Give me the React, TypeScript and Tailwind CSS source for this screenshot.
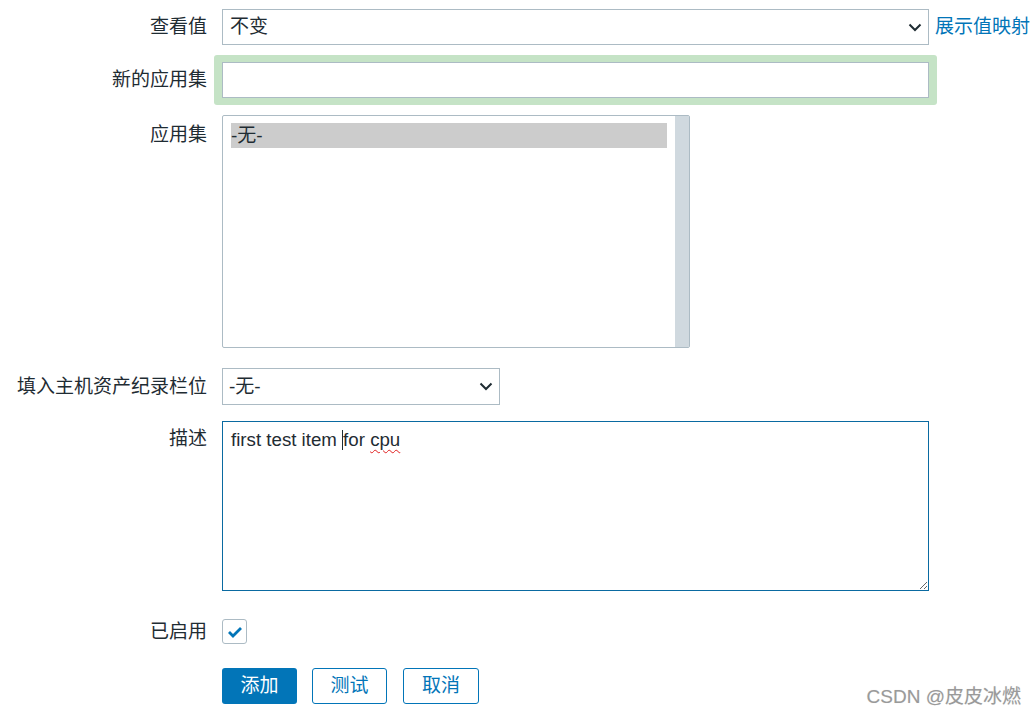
import React from "react";

const FONT = { fontFamily: '"Liberation Sans", "Noto Sans CJK SC", sans-serif' };

function Chevron() {
  return (
    <svg width="14" height="9" viewBox="0 0 14 9" className="shrink-0">
      <path d="M1.5 1.5 L7 7 L12.5 1.5" fill="none" stroke="#1f2c33" strokeWidth="2" />
    </svg>
  );
}

function Label({ children, className = "" }: { children: React.ReactNode; className?: string }) {
  return (
    <div className={`w-[207px] shrink-0 text-right text-[19px] leading-[24px] text-[#1f2c33] ${className}`}>
      {children}
    </div>
  );
}

export default function App() {
  return (
    <div className="relative w-[1035px] h-[715px] bg-white overflow-hidden" style={FONT}>
      <div className="flex flex-col pt-[9px]">
        {/* 查看值 */}
        <div className="flex items-center">
          <Label>查看值</Label>
          <div className="ml-[15px] w-[707px] h-[36px] border border-[#acbbc4] flex items-center justify-between pl-[7px] pr-[6px]">
            <span className="text-[19px] leading-[24px] text-[#1f2c33]">不变</span>
            <Chevron />
          </div>
          <a className="ml-[6px] text-[19px] leading-[24px] text-[#0275b8] whitespace-nowrap">展示值映射</a>
        </div>

        {/* 新的应用集 */}
        <div className="flex items-center mt-[10px]">
          <Label>新的应用集</Label>
          <div className="ml-[7px] p-[7px] pl-[8px] pr-[8px] bg-[#c5e3c6] rounded-[3px]">
            <div className="w-[707px] h-[36px] border border-[#acbbc4] bg-white" />
          </div>
        </div>

        {/* 应用集 */}
        <div className="flex mt-[10px]">
          <Label className="pt-[8px]">应用集</Label>
          <div className="ml-[15px] w-[468px] h-[233px] border border-[#acbbc4] rounded-[2px] flex">
            <div className="flex-1 pl-[8px] pr-[8px] pt-[7px]">
              <div className="h-[25px] bg-[#cccccc] text-[19px] leading-[25px] text-[#1f2c33]">-无-</div>
            </div>
            <div className="w-[14px] bg-[#d0d9df]" />
          </div>
        </div>

        {/* 填入主机资产纪录栏位 */}
        <div className="flex items-center mt-[20px]">
          <Label>填入主机资产纪录栏位</Label>
          <div className="ml-[15px] w-[278px] h-[37px] border border-[#acbbc4] flex items-center justify-between pl-[6px] pr-[6px]">
            <span className="text-[19px] leading-[24px] text-[#1f2c33]">-无-</span>
            <Chevron />
          </div>
        </div>

        {/* 描述 */}
        <div className="flex mt-[16px]">
          <Label className="pt-[6px]">描述</Label>
          <div className="ml-[15px] w-[707px] h-[170px] border border-[#0a6aa1] resize overflow-auto pl-[8px] pt-[6px] text-[18.7px] leading-[24px] text-[#1f2c33]">
            first test item <span className="inline-block w-px h-[20px] bg-[#1f2c33] align-[-4px]" />for{" "}
            <span className="underline decoration-wavy decoration-[#e02020] decoration-1 underline-offset-[3px]">cpu</span>
          </div>
        </div>

        {/* 已启用 */}
        <div className="flex items-center mt-[28px]">
          <Label className="pr-[15px] w-[222px]">已启用</Label>
          <div className="w-[25px] h-[25px] border border-[#acbbc4] rounded-[3px] flex items-center justify-center">
            <svg width="16" height="12" viewBox="0 0 16 12">
              <path d="M2 6 L6 10 L14 2" fill="none" stroke="#0275b8" strokeWidth="2.8" />
            </svg>
          </div>
        </div>

        {/* buttons */}
        <div className="flex mt-[24px] pl-[222px] gap-[15px]">
          <button className="w-[75px] h-[36px] bg-[#0275b8] text-white text-[19px] rounded-[3px]">添加</button>
          <button className="w-[75px] h-[36px] border border-[#0275b8] text-[#0275b8] text-[19px] rounded-[3px] bg-white">测试</button>
          <button className="w-[76px] h-[36px] border border-[#0275b8] text-[#0275b8] text-[19px] rounded-[3px] bg-white ml-[1px]">取消</button>
        </div>
      </div>

      <div className="absolute right-[14px] bottom-[7px] text-[19px] leading-[22px] text-[#9a9a9a] [text-shadow:0_0_1px_#ddd]">
        CSDN @皮皮冰燃
      </div>
    </div>
  );
}
